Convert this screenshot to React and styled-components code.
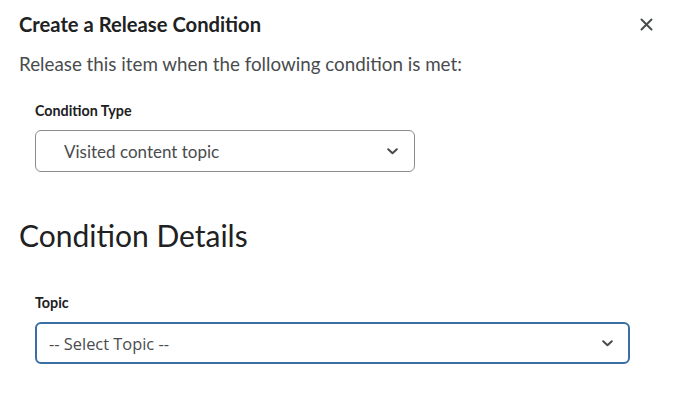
import React from "react";
import styled, { createGlobalStyle } from "styled-components";

const GlobalStyle = createGlobalStyle`
  html, body {
    margin: 0;
    padding: 0;
    background: #ffffff;
  }
  body {
    font-family: Lato, "Noto Sans", sans-serif;
    color: #202122;
  }
`;

const Dialog = styled.div`
  width: 676px;
  height: 402px;
  box-sizing: border-box;
  padding: 12px 19px 0 19px;
  background: white;
`;

const Header = styled.div`
  display: flex;
  align-items: center;
  justify-content: space-between;
  height: 24px;
`;

const Title = styled.h2`
  margin: 0;
  font-size: 20.2px;
  font-weight: 700;
  color: #202122;
`;

const CloseButton = styled.button`
  border: none;
  background: none;
  padding: 0;
  margin-right: 4px;
  width: 14px;
  height: 14px;
  display: flex;
  align-items: center;
  justify-content: center;
  cursor: pointer;
  color: #494c4e;
`;

const Intro = styled.p`
  margin: 16px 0 0 0;
  font-size: 18.8px;
  line-height: 24px;
  color: #494c4e;
`;

const Field = styled.div`
  padding-left: 16px;
  margin-top: ${(p) => p.$top}px;
  display: flex;
  flex-direction: column;
`;

const Label = styled.label`
  font-size: 14.3px;
  font-weight: 700;
  color: #202122;
  line-height: 16px;
  margin-bottom: 11px;
`;

const Select = styled.div`
  box-sizing: border-box;
  width: ${(p) => p.$width}px;
  height: 42px;
  border-radius: 6px;
  border: ${(p) => (p.$focused ? "2px solid #3a6ea5" : "1px solid #8a8c8e")};
  display: flex;
  align-items: center;
  justify-content: space-between;
  padding-left: ${(p) => p.$pad}px;
  padding-right: ${(p) => (p.$focused ? 15 : 16)}px;
  background: white;
`;

const SelectText = styled.span`
  font-family: ${(p) => (p.$plain ? '"Open Sans", "Noto Sans", sans-serif' : 'Lato, "Noto Sans", sans-serif')};
  font-size: ${(p) => (p.$plain ? 16.4 : 17)}px;
  color: #494c4e;
`;

const Heading = styled.h1`
  margin: 45px 0 0 0;
  font-size: 30px;
  font-weight: 400;
  line-height: 36px;
  color: #202122;
`;

const Chevron = () => (
  <svg width="11" height="7" viewBox="0 0 11 7" fill="none">
    <path d="M1.2 1.2 L5.5 5.3 L9.8 1.2" stroke="#494c4e" strokeWidth="2" strokeLinecap="round" strokeLinejoin="round" />
  </svg>
);

export default function App() {
  return (
    <>
      <GlobalStyle />
      <Dialog>
        <Header>
          <Title>Create a Release Condition</Title>
          <CloseButton aria-label="Close">
            <svg width="13" height="13" viewBox="0 0 13 13">
              <path d="M1.5 1.5 L11.5 11.5 M11.5 1.5 L1.5 11.5" stroke="#494c4e" strokeWidth="2" strokeLinecap="round" />
            </svg>
          </CloseButton>
        </Header>
        <Intro>Release this item when the following condition is met:</Intro>
        <Field $top={27}>
          <Label>Condition Type</Label>
          <Select $width={380} $pad={28}>
            <SelectText>Visited content topic</SelectText>
            <Chevron />
          </Select>
        </Field>
        <Heading>Condition Details</Heading>
        <Field $top={42}>
          <Label>Topic</Label>
          <Select $width={595} $pad={12} $focused>
            <SelectText $plain>-- Select Topic --</SelectText>
            <Chevron />
          </Select>
        </Field>
      </Dialog>
    </>
  );
}
